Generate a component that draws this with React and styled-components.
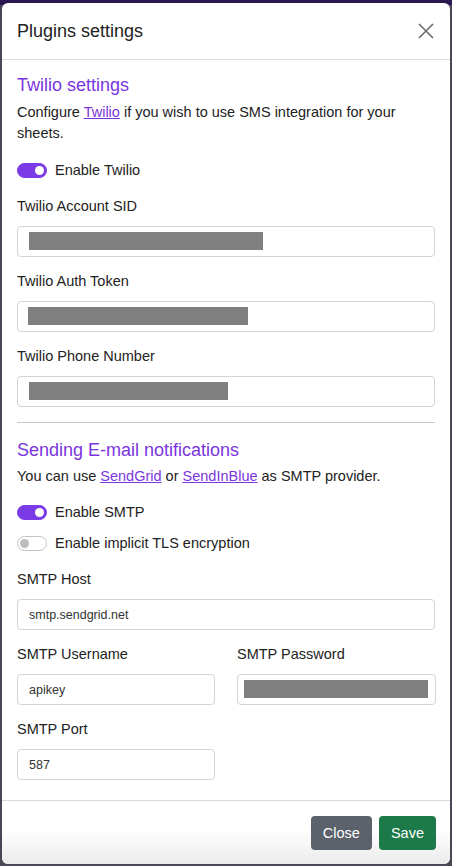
import React from "react";
import styled, { createGlobalStyle } from "styled-components";

const Global = createGlobalStyle`
  html, body {
    margin: 0;
    padding: 0;
  }
  body {
    background: linear-gradient(#2c1850 0, #2c1850 5px, #4b4656 5px);
    font-family: "Liberation Sans", Arial, sans-serif;
    color: #212529;
  }
`;

const Modal = styled.div`
  margin: 3px 2px 2px;
  width: 448px;
  height: 861px;
  background: #fff;
  border-radius: 6px;
  overflow: hidden;
  display: flex;
  flex-direction: column;
`;

const Header = styled.div`
  height: 56px;
  flex-shrink: 0;
  display: flex;
  align-items: center;
  justify-content: space-between;
  padding: 0 14px 0 15px;
  border-bottom: 1px solid #dcdcdc;
`;

const Title = styled.h5`
  margin: 0;
  font-size: 18px;
  font-weight: 400;
  color: #222;
`;

const CloseX = styled.button`
  border: 0;
  background: none;
  padding: 0;
  width: 20px;
  height: 20px;
  display: flex;
  align-items: center;
  justify-content: center;
  cursor: pointer;
`;

const Body = styled.div`
  flex: 1;
  padding: 13px 15px 0;
`;

const Heading = styled.h4`
  margin: 0;
  font-size: 18px;
  line-height: 24px;
  font-weight: 400;
  color: #7a35de;
`;

const Para = styled.p`
  margin: ${(p) => p.$top}px 0 0;
  font-size: 14.5px;
  line-height: 21px;
  color: #222;
`;

const Link = styled.a`
  color: #7a35de;
  text-decoration: underline;
`;

const SwitchRow = styled.label`
  display: flex;
  align-items: center;
  gap: 8px;
  margin-top: ${(p) => p.$top}px;
  font-size: 14.5px;
  line-height: 21px;
  color: #222;
`;

const Track = styled.span`
  position: relative;
  width: 28px;
  height: 13px;
  border-radius: 8px;
  border: 1px solid ${(p) => (p.$on ? "#7a3ae6" : "#c4c4c4")};
  background: ${(p) => (p.$on ? "#7a3ae6" : "#fff")};
  flex-shrink: 0;

  &::after {
    content: "";
    position: absolute;
    top: 2px;
    left: ${(p) => (p.$on ? "17px" : "2px")};
    width: 9px;
    height: 9px;
    border-radius: 50%;
    background: ${(p) => (p.$on ? "#fff" : "#bdbdbd")};
  }
`;

const Field = styled.div`
  margin-top: ${(p) => p.$top}px;
`;

const Label = styled.div`
  font-size: 14.5px;
  line-height: 21px;
  color: #222;
  margin-bottom: 9px;
`;

const Input = styled.div`
  position: relative;
  box-sizing: border-box;
  height: 31px;
  border: 1px solid #d4d4d4;
  border-radius: 4px;
  padding: 0 11px;
  display: flex;
  align-items: center;
  font-size: 12.5px;
  color: #333;
`;

const Redact = styled.span`
  position: absolute;
  top: 5px;
  left: ${(p) => p.$left}px;
  height: 18px;
  background: #808080;
`;

const Pair = styled.div`
  display: grid;
  grid-template-columns: 198px 199px;
  column-gap: 22px;
  margin-top: 14px;
`;

const Rule = styled.hr`
  margin: 15px 0 15px;
  border: 0;
  border-top: 1px solid #c8c8c8;
`;

const Footer = styled.div`
  height: 63px;
  flex-shrink: 0;
  border-top: 1px solid #d6dbe0;
  display: flex;
  align-items: center;
  justify-content: flex-end;
  gap: 7px;
  padding: 0 14px 0 0;
  background: linear-gradient(#fff 45%, #ebebeb);
`;

const Button = styled.button`
  height: 34px;
  padding: 0 ${(p) => p.$pad}px;
  border: 0;
  border-radius: 4px;
  font-family: "Liberation Sans", Arial, sans-serif;
  font-size: 14.5px;
  color: #fff;
  background: ${(p) => p.$bg};
  cursor: pointer;
`;

function Redacted({ left = 11, width }) {
  return <Redact $left={left} style={{ width }} />;
}

export default function App() {
  return (
    <>
      <Global />
      <Modal>
        <Header>
          <Title>Plugins settings</Title>
          <CloseX aria-label="Close">
            <svg width="16" height="16" viewBox="0 0 16 16">
              <path d="M1 1L15 15M15 1L1 15" stroke="#6b6b6b" strokeWidth="1.6" />
            </svg>
          </CloseX>
        </Header>
        <Body>
          <Heading>Twilio settings</Heading>
          <Para $top={5}>
            Configure <Link href="#">Twilio</Link> if you wish to use SMS integration for your sheets.
          </Para>
          <SwitchRow $top={16}>
            <Track $on />
            Enable Twilio
          </SwitchRow>
          <Field $top={15}>
            <Label>Twilio Account SID</Label>
            <Input>
              <Redacted left={11} width={234} />
            </Input>
          </Field>
          <Field $top={14}>
            <Label>Twilio Auth Token</Label>
            <Input>
              <Redacted left={10} width={220} />
            </Input>
          </Field>
          <Field $top={14}>
            <Label>Twilio Phone Number</Label>
            <Input>
              <Redacted left={11} width={199} />
            </Input>
          </Field>
          <Rule />
          <Heading>Sending E-mail notifications</Heading>
          <Para $top={4}>
            You can use <Link href="#">SendGrid</Link> or <Link href="#">SendInBlue</Link> as SMTP provider.
          </Para>
          <SwitchRow $top={15}>
            <Track $on />
            Enable SMTP
          </SwitchRow>
          <SwitchRow $top={10}>
            <Track />
            Enable implicit TLS encryption
          </SwitchRow>
          <Field $top={15}>
            <Label>SMTP Host</Label>
            <Input>smtp.sendgrid.net</Input>
          </Field>
          <Pair>
            <div>
              <Label>SMTP Username</Label>
              <Input>apikey</Input>
            </div>
            <div>
              <Label>SMTP Password</Label>
              <Input>
                <Redacted left={6} width={184} />
              </Input>
            </div>
          </Pair>
          <Field $top={14} style={{ width: 198 }}>
            <Label>SMTP Port</Label>
            <Input>587</Input>
          </Field>
        </Body>
        <Footer>
          <Button $bg="#5b626b" $pad={12}>Close</Button>
          <Button $bg="#1b7a47" $pad={12}>Save</Button>
        </Footer>
      </Modal>
    </>
  );
}
